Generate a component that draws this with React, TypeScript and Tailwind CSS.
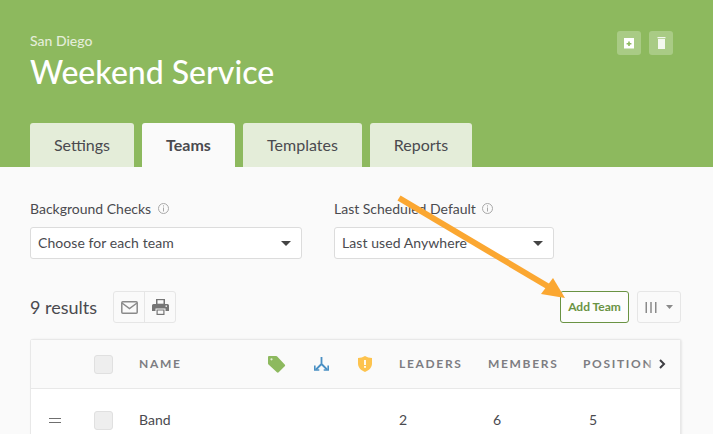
export default function App() {
  const tabs = [
    { label: "Settings", w: "w-[104px]", active: false },
    { label: "Teams", w: "w-[93px]", active: true },
    { label: "Templates", w: "w-[119px]", active: false },
    { label: "Reports", w: "w-[102px]", active: false },
  ];
  return (
    <div className="relative w-[713px] h-[434px] overflow-hidden bg-[#fafafa] font-['Lato',sans-serif] text-[#4a4a4f]">
      <header className="h-[167px] bg-[#8db95e] px-[30px] flex flex-col">
        <div className="flex justify-between pt-[31px] h-[123px]">
          <div>
            <div className="text-[14px] leading-[20px] text-[#e4edd9] font-medium">San Diego</div>
            <h1 className="text-[32px] leading-[42px] font-medium text-white">Weekend Service</h1>
          </div>
          <div className="flex gap-[8px] mr-[10px]">
            <button className="w-6 h-6 rounded-[3px] bg-[#a9cb85] flex items-center justify-center">
              <svg width="12" height="11" viewBox="0 0 12 11">
                <path d="M1 0h10v10.500H1z" fill="#fff" />
                <path d="M5.200 3.500h1.600v1.500h1.600v1.500H6.800v1.500H5.200V6.500H3.600V5h1.600z" fill="#8db95e" />
              </svg>
            </button>
            <button className="w-6 h-6 rounded-[3px] bg-[#a9cb85] flex items-center justify-center">
              <svg width="9" height="12" viewBox="0 0 9 12">
                <path d="M0.500 0h8v1.300h-8zM1 2h7v10H1z" fill="#f4f8ef" />
              </svg>
            </button>
          </div>
        </div>
        <nav className="flex gap-[8px]">
          {tabs.map((t) => (
            <div
              key={t.label}
              className={`${t.w} h-[44px] rounded-t-[3px] flex items-center justify-center text-[16px] ${
                t.active ? "bg-[#fafafa] font-bold" : "bg-[#e4edd9]"
              }`}
            >
              {t.label}
            </div>
          ))}
        </nav>
      </header>

      <main className="px-[30px] pt-[32px]">
        <div className="flex gap-[32px]">
          <Field label="Background Checks" value="Choose for each team" w="w-[272px]" />
          <Field label="Last Scheduled Default" value="Last used Anywhere" w="w-[220px]" />
        </div>

        <div className="flex items-center mt-[32px] h-[32px] w-[651px]">
          <span className="text-[18px] w-[83px]">9 results</span>
          <div className="flex h-[32px] w-[63px] border border-[#e6e6e6] rounded-[3px]">
            <div className="w-[31px] border-r border-[#e6e6e6] flex items-center justify-center">
              <svg width="17" height="13" viewBox="0 0 17 13" fill="none" stroke="#8a8a8a" strokeWidth="1.500">
                <rect x="0.800" y="0.800" width="15.400" height="11.400" rx="1" />
                <path d="M1 2l7.500 5.500L16 2" />
              </svg>
            </div>
            <div className="flex-1 flex items-center justify-center">
              <svg width="17" height="16" viewBox="0 0 17 16">
                <path
                  d="M4 0h9v5H4zM1.500 5h14A1.500 1.500 0 0 1 17 6.500V12h-3.500V9.500h-10V12H0V6.500A1.500 1.500 0 0 1 1.500 5zM4.500 10.500h8V16h-8z"
                  fill="#757575"
                />
                <rect x="5.500" y="1.200" width="6" height="3.500" fill="#fafafa" />
                <rect x="5.700" y="11.500" width="5.600" height="3.300" fill="#fafafa" />
                <rect x="13.500" y="6.500" width="1.500" height="1.300" fill="#fafafa" />
              </svg>
            </div>
          </div>
          <button className="ml-auto w-[69px] h-[32px] border border-[#6a9343] rounded-[3px] text-[12px] font-bold text-[#6a9343] bg-[#fdfdfd]">
            Add Team
          </button>
          <div className="ml-[8px] w-[44px] h-[32px] border border-[#e6e6e6] rounded-[3px] flex items-center justify-center gap-[9px]">
            <svg width="12" height="11" viewBox="0 0 12 11" fill="#8a8a8a">
              <rect x="0.500" y="0" width="1.500" height="11" />
              <rect x="5.250" y="0" width="1.500" height="11" />
              <rect x="10" y="0" width="1.500" height="11" />
            </svg>
            <svg width="7" height="4" viewBox="0 0 7 4"><path d="M0 0h7L3.500 4z" fill="#8a8a8a" /></svg>
          </div>
        </div>

        <div className="mt-[16px] w-[651px] border border-[#e8e8e8] border-b-0 rounded-t-[3px] bg-white shadow-[1px_0_2px_rgba(0,0,0,0.08)]">
          <div className="relative h-[49px] bg-[#fafafa] border-b border-[#e8e8e8] flex items-center text-[12px] font-bold tracking-[0.14em] text-[#7d7d82]">
            <span className="w-[63px]" />
            <Check />
            <span className="w-[129px] ml-[26px]">NAME</span>
            <span className="w-[46px] flex">
              <svg width="18" height="17" viewBox="0 0 18 17">
                <path d="M1 0h7.200a1.500 1.500 0 0 1 1 .5l7.500 8a1.300 1.300 0 0 1 0 1.800l-6 6a1.300 1.300 0 0 1-1.800 0L.5 8.500A1.500 1.500 0 0 1 0 7.500V1a1 1 0 0 1 1-1z" fill="#8db95e" />
                <circle cx="3.500" cy="3.300" r="1.100" fill="#e4edd9" />
              </svg>
            </span>
            <span className="w-[44px] flex">
              <svg width="15" height="14" viewBox="0 0 15 14" fill="none" stroke="#4a90c4" strokeWidth="1.800">
                <path d="M7.500 0v7M7.500 7L2 12.500M7.500 7L13 12.500" />
                <path d="M0.800 8.500v4.500h4.500M14.200 8.500v4.500H9.700" strokeWidth="1.600" />
              </svg>
            </span>
            <span className="w-[41px] flex">
              <svg width="14" height="16" viewBox="0 0 14 16">
                <path d="M7 0c2 1.300 4.300 2 7 2v5.500C14 11.500 11 14.500 7 16 3 14.500 0 11.500 0 7.500V2c2.700 0 5-.7 7-2z" fill="#fdc34e" />
                <rect x="6.100" y="4" width="1.800" height="5" fill="#fff" />
                <rect x="6.100" y="10" width="1.800" height="1.800" fill="#fff" />
              </svg>
            </span>
            <span className="w-[89px]">LEADERS</span>
            <span className="w-[95px]">MEMBERS</span>
            <span className="w-[70px] whitespace-nowrap">POSITION</span>
            <span className="absolute right-[14px] top-[16px] w-[20px] h-[16px] flex justify-end bg-gradient-to-r from-transparent to-[#fafafa] to-50%">
              <svg width="7" height="10" viewBox="0 0 7 10" className="mt-[3px]" fill="none" stroke="#3d3d42" strokeWidth="2">
                <path d="M1 1l4 4-4 4" />
              </svg>
            </span>
          </div>
          <div className="h-[62px] flex items-center text-[14px]">
            <span className="w-[63px] pl-[18px] block">
              <span className="block w-[12px] h-[5px] border-y border-[#6f6f6f]" />
            </span>
            <Check />
            <span className="w-[129px] ml-[26px] pb-[2px]">Band</span>
            <span className="w-[131px]" />
            <span className="w-[94px] pb-[2px]">2</span>
            <span className="w-[96px] pb-[2px]">6</span>
            <span className="pb-[2px]">5</span>
          </div>
        </div>
      </main>

      <svg className="absolute left-0 top-0 pointer-events-none" width="713" height="434">
        <path d="M399 198L549 287" stroke="#fba731" strokeWidth="6" fill="none" />
        <path d="M565 298L541 294L553 278z" fill="#fba731" />
      </svg>
    </div>
  );
}

function Check() {
  return <span className="w-[19px] h-[19px] rounded-[3px] bg-[#eeeeee] border border-[#e0e0e0]" />;
}

function Field({ label, value, w }: { label: string; value: string; w: string }) {
  return (
    <div className={w}>
      <div className="flex items-center gap-[6.5px] h-[18px] text-[14px]">
        {label}
        <svg width="11" height="11" viewBox="0 0 11 11" fill="none" stroke="#a8a8a8">
          <circle cx="5.500" cy="5.500" r="5" />
          <path d="M5.500 4.500v4M5.500 2.300v1.200" />
        </svg>
      </div>
      <div className="mt-[10px] h-[32px] bg-white border border-[#dcdcdc] rounded-[3px] flex items-center justify-between pl-[7px] pr-[10px] text-[14px] tracking-[0.005em]">
        <span className="pb-[2px]">{value}</span>
        <svg width="10" height="5" viewBox="0 0 10 5"><path d="M0 0h10L5 5z" fill="#444" /></svg>
      </div>
    </div>
  );
}
